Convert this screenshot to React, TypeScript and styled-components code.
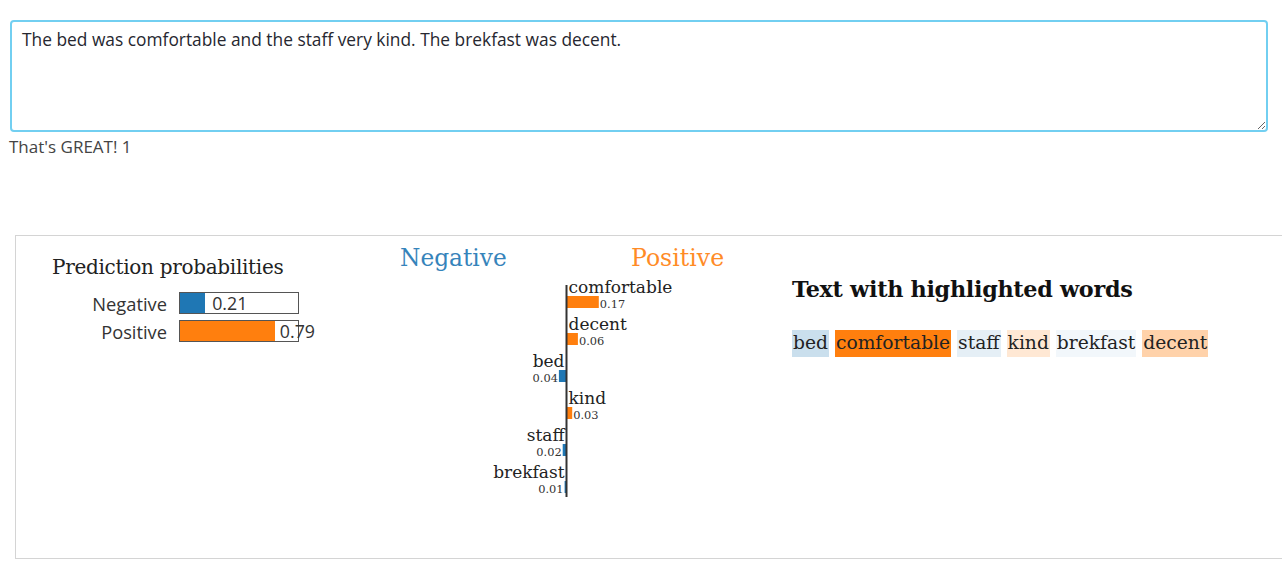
import React, { useEffect, useRef } from 'react'
import styled, { createGlobalStyle } from 'styled-components'

const GlobalStyle = createGlobalStyle`
  html, body {
    margin: 0;
    padding: 0;
    background: #ffffff;
    overflow: hidden;
  }
  body {
    font-family: 'Open Sans', 'Noto Sans', sans-serif;
    color: #333;
  }
`

const Page = styled.div`
  padding: 20px 19px 0 10px;
`

const InputBox = styled.textarea`
  display: block;
  box-sizing: border-box;
  width: 1258px;
  height: 112px;
  padding: 4px 10px 8px;
  border: 2px solid #72cff1;
  border-radius: 4px;
  font-family: 'Open Sans', 'Noto Sans', sans-serif;
  font-size: 17.35px;
  line-height: 26px;
  color: #262730;
  caret-color: #111;
  resize: vertical;
  outline: none;
`

const Status = styled.div`
  margin: 3px 0 0 -1px;
  font-size: 17px;
  line-height: 24px;
  color: #444;
`

const Panel = styled.div`
  display: flex;
  box-sizing: border-box;
  width: 1267px;
  height: 324px;
  margin: 76px 0 0 5px;
  border: 1px solid #d4d4d4;
  border-right: none;
  font-family: 'DejaVu Serif', 'Liberation Serif', serif;
`

const ProbColumn = styled.div`
  width: 374px;
  padding: 18px 0 0 36px;
  box-sizing: border-box;
`

const ProbTitle = styled.div`
  font-size: 20px;
  line-height: 26px;
  color: #222;
  margin-bottom: 12px;
  letter-spacing: -0.3px;
`

const ProbRow = styled.div`
  display: flex;
  align-items: center;
  height: 22px;
  margin-bottom: 6px;
`

const ProbLabel = styled.div`
  width: 115px;
  text-align: right;
  padding-right: 12px;
  font-family: 'Open Sans', 'Noto Sans', sans-serif;
  font-size: 18.3px;
  color: #333;
`

const ProbTrack = styled.div`
  position: relative;
  box-sizing: border-box;
  width: 120px;
  height: 22px;
  border: 1px solid #555;
  background: #fff;
`

const ProbFill = styled.div<{ $color: string }>`
  height: 100%;
  background: ${({ $color }) => $color};
`

const ProbValue = styled.span`
  position: absolute;
  top: -1px;
  font-family: 'Open Sans', 'Noto Sans', sans-serif;
  font-size: 17.8px;
  line-height: 22px;
  color: #333;
`

const ChartColumn = styled.div`
  width: 402px;
  padding-top: 4px;
`

const TextColumn = styled.div`
  flex: 1;
  padding-top: 38px;
`

const TextTitle = styled.div`
  font-size: 22.3px;
  font-weight: bold;
  line-height: 30px;
  color: #111;
  margin-bottom: 26px;
  letter-spacing: -0.3px;
`

const Words = styled.div`
  font-size: 18.7px;
  line-height: 26px;
  color: #222;
`

const Word = styled.span<{ $bg: string }>`
  background: ${({ $bg }) => $bg};
  padding: 2px 1px 4px 1px;
`

const BLUE = '#1f77b4'
const ORANGE = '#ff7f0e'

const probs = [
  { label: 'Negative', value: 0.21, color: BLUE },
  { label: 'Positive', value: 0.79, color: ORANGE },
]

const features = [
  { word: 'comfortable', weight: 0.17 },
  { word: 'decent', weight: 0.06 },
  { word: 'bed', weight: -0.04 },
  { word: 'kind', weight: 0.03 },
  { word: 'staff', weight: -0.02 },
  { word: 'brekfast', weight: -0.01 },
]

const textWords = ['bed', 'comfortable', 'staff', 'kind', 'brekfast', 'decent']

const maxWeight = 0.17

const highlight = (w: number) => {
  const f = features.find((x) => x.word === textWords[w])!
  const a = Math.abs(f.weight) / maxWeight
  return f.weight > 0 ? `rgba(255, 127, 14, ${a})` : `rgba(31, 119, 180, ${a})`
}

const ExplainChart = () => {
  const axis = 176.5
  const scale = 190
  return (
    <svg width="402" height="262" viewBox="0 0 402 262">
      <text x="10" y="26" fontSize="23.3" fill={BLUE} fontFamily="'DejaVu Serif', serif" opacity="0.9">
        Negative
      </text>
      <text x="241" y="26" fontSize="23.6" fill={ORANGE} fontFamily="'DejaVu Serif', serif" opacity="0.9">
        Positive
      </text>
      {features.map((f, i) => {
        const w = Math.abs(f.weight) * scale
        const top = 53 + i * 37
        const pos = f.weight > 0
        return (
          <g key={f.word} fontFamily="'DejaVu Serif', serif">
            <text
              x={pos ? axis + 2 : axis - 2}
              y={top}
              fontSize="17"
              fill="#222"
              textAnchor={pos ? 'start' : 'end'}
            >
              {f.word}
            </text>
            <rect
              x={pos ? axis : axis - w}
              y={top + 3}
              width={w}
              height={12}
              fill={pos ? ORANGE : BLUE}
            />
            <text
              x={pos ? axis + w + 1 : axis - w - 1}
              y={top + 15}
              fontSize="11.4"
              fill="#333"
              textAnchor={pos ? 'start' : 'end'}
            >
              {Math.abs(f.weight).toFixed(2)}
            </text>
          </g>
        )
      })}
      <line x1={axis} y1="45" x2={axis} y2="257" stroke="#333" strokeWidth="2" />
    </svg>
  )
}

export default function App() {
  const inputRef = useRef<HTMLTextAreaElement>(null)

  useEffect(() => {
    const el = inputRef.current
    if (el) {
      el.focus()
      el.setSelectionRange(el.value.length, el.value.length)
    }
  }, [])

  return (
    <>
      <GlobalStyle />
      <Page>
        <InputBox
          ref={inputRef}
          spellCheck
          defaultValue="The bed was comfortable and the staff very kind. The brekfast was decent."
        />
        <Status>That's GREAT! 1</Status>
        <Panel>
          <ProbColumn>
            <ProbTitle>Prediction probabilities</ProbTitle>
            {probs.map((p) => {
              const fill = p.value * 120
              return (
                <ProbRow key={p.label}>
                  <ProbLabel>{p.label}</ProbLabel>
                  <ProbTrack>
                    <ProbFill $color={p.color} style={{ width: `${fill}px` }} />
                    <ProbValue style={{ left: `${fill + (p.value < 0.5 ? 7 : 5)}px` }}>
                      {p.value.toFixed(2)}
                    </ProbValue>
                  </ProbTrack>
                </ProbRow>
              )
            })}
          </ProbColumn>
          <ChartColumn>
            <ExplainChart />
          </ChartColumn>
          <TextColumn>
            <TextTitle>Text with highlighted words</TextTitle>
            <Words>
              {textWords.map((w, i) => (
                <React.Fragment key={w}>
                  <Word $bg={highlight(i)}>{w}</Word>{' '}
                </React.Fragment>
              ))}
            </Words>
          </TextColumn>
        </Panel>
      </Page>
    </>
  )
}
